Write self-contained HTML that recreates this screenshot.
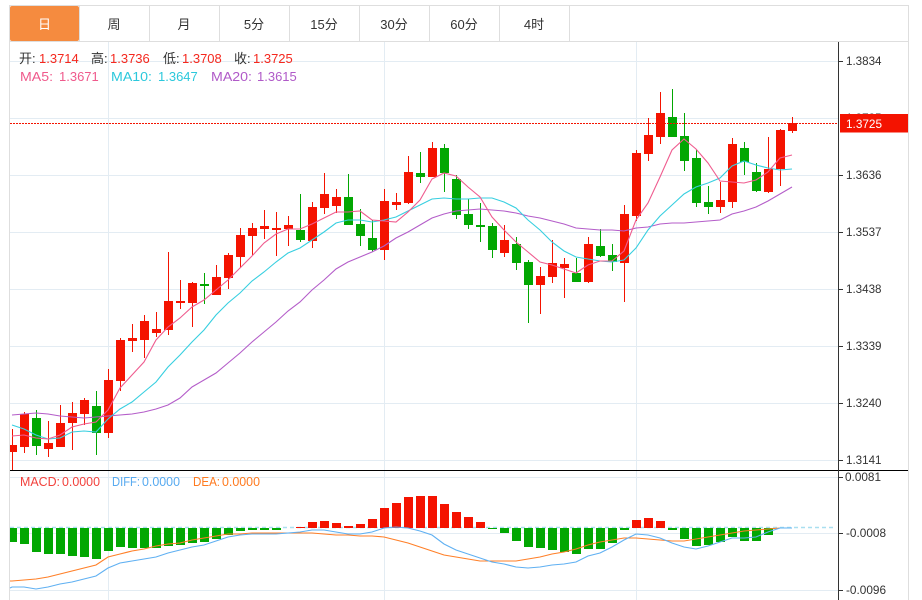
<!DOCTYPE html>
<html lang="zh">
<head>
<meta charset="utf-8">
<title>K线图</title>
<style>
html,body{margin:0;padding:0;background:#fff;width:922px;height:600px;overflow:hidden}
svg{display:block;position:absolute;left:0;top:0}
text{font-family:"Liberation Sans","Noto Sans CJK SC",sans-serif;font-size:13px}
.ax{font-size:12px;fill:#333}
.tab{font-size:13px;fill:#333;text-anchor:middle}
</style>
</head>
<body>
<svg width="922" height="600" viewBox="0 0 922 600" xmlns="http://www.w3.org/2000/svg">
<!-- grid -->
<path fill="none" stroke="#e3ecf3" stroke-width="1" d="M10 61.5H838M10 118.5H838M10 175.5H838M10 232.5H838M10 289.5H838M10 346.5H838M10 403.5H838M10 460.5H838M10 477.5H838M10 533.5H838M10 590.5H838M108.5 42V600M384.5 42V600M636.5 42V600"/>
<!-- frame and tabs -->
<path fill="none" stroke="#dedede" stroke-width="1" d="M9.5 5V600M908.5 5V600M9.5 5.5H908.5M9.5 41.5H908.5M79.5 6V41M149.5 6V41M219.5 6V41M289.5 6V41M359.5 6V41M429.5 6V41M499.5 6V41M569.5 6V41"/>
<rect x="10" y="6" width="69" height="35" rx="2" fill="#f58b3f"/>
<text class="tab" x="44.500" y="29" style="fill:#fff">日</text>
<text class="tab" x="114" y="29">周</text>
<text class="tab" x="184" y="29">月</text>
<text class="tab" x="254" y="29">5分</text>
<text class="tab" x="324" y="29">15分</text>
<text class="tab" x="394" y="29">30分</text>
<text class="tab" x="464" y="29">60分</text>
<text class="tab" x="534" y="29">4时</text>
<!-- candle wicks -->
<path fill="none" stroke="#f41300" stroke-width="1" d="M12.5 429V470M24.5 412V453M48.5 421V457M60.5 405V447M72.5 402V450M84.5 398V425M108.5 369V438M120.5 338V391M132.5 324V352M144.5 315V358M156.5 312V337M168.5 252V335M180.5 280V309M192.5 282V327M216.5 265V295M228.5 253V289M240.5 228V268M252.5 223V255M264.5 210V239M276.5 212V256M288.5 216V246M312.5 202V248M324.5 173V214M336.5 189V213M384.5 189V260M396.5 193V210M408.5 156V204M432.5 142V177M504.5 225V257M540.5 267V314M552.5 240V283M564.5 258V298M588.5 237V283M624.5 205V302M636.5 150V221M648.5 118V161M660.5 92V144M720.5 182V213M732.5 138V208M768.5 137V193M780.5 129V186M792.5 117V133"/>
<path fill="none" stroke="#02a702" stroke-width="1" d="M36.5 410V455M96.5 391V455M204.5 273V304M300.5 194V242M348.5 174V225M360.5 209V246M372.5 220V252M420.5 152V183M444.5 144V192M456.5 175V219M468.5 199V229M480.5 203V242M492.5 223V258M516.5 237V270M528.5 260V323M576.5 258V282M600.5 229V257M612.5 244V271M672.5 89V137M684.5 113V171M696.5 150V207M708.5 186V214M744.5 142V175M756.5 163V192"/>
<!-- candle bodies -->
<path fill="#f41300" d="M10 445h7v7h-7zM20 414h9v33h-9zM44 443h9v6h-9zM56 423h9v24h-9zM68 413h9v10h-9zM80 400h9v14h-9zM104 380h9v53h-9zM116 340h9v41h-9zM128 338h9v3h-9zM140 321h9v19h-9zM152 329h9v4h-9zM164 301h9v29h-9zM176 301h9v2h-9zM188 283h9v20h-9zM212 277h9v18h-9zM224 255h9v23h-9zM236 235h9v22h-9zM248 228h9v8h-9zM260 226h9v3h-9zM272 228h9v2h-9zM284 225h9v4h-9zM308 207h9v34h-9zM320 194h9v14h-9zM332 197h9v9h-9zM380 201h9v49h-9zM392 202h9v3h-9zM404 172h9v31h-9zM428 148h9v29h-9zM500 240h9v13h-9zM536 276h9v9h-9zM548 263h9v14h-9zM560 264h9v4h-9zM584 244h9v38h-9zM620 214h9v49h-9zM632 153h9v63h-9zM644 135h9v19h-9zM656 113h9v24h-9zM716 200h9v7h-9zM728 144h9v58h-9zM764 169h9v23h-9zM776 130h9v39h-9zM788 123h9v8h-9z"/>
<path fill="#02a702" d="M32 418h9v28h-9zM92 406h9v27h-9zM200 284h9v2h-9zM296 230h9v10h-9zM344 197h9v28h-9zM356 224h9v12h-9zM368 238h9v12h-9zM416 173h9v4h-9zM440 148h9v25h-9zM452 179h9v36h-9zM464 214h9v11h-9zM476 225h9v2h-9zM488 226h9v24h-9zM512 244h9v19h-9zM524 262h9v23h-9zM572 273h9v9h-9zM596 246h9v10h-9zM608 255h9v7h-9zM668 117h9v20h-9zM680 136h9v25h-9zM692 158h9v45h-9zM704 202h9v5h-9zM740 148h9v14h-9zM752 172h9v19h-9z"/>
<!-- moving averages -->
<polyline fill="none" stroke="#b45dc9" stroke-width="1.1" points="12,415 24,414 36,413 48,414 60,416 72,417 84,418 96,417 108,416 120,415 132,414 144,412 156,409 168,405 180,398 192,387 204,380 216,373 228,363 240,353 252,342 264,332 276,322 288,311 300,302 312,290 324,280 336,269 348,262 360,257 372,252 384,246 396,238 408,232 420,225 432,218 444,214 456,211 468,210 480,209 492,210 504,211 516,213 528,216 540,218 552,221 564,224 576,228 588,229 600,230 612,230 624,231 636,228 648,227 660,224 672,223 684,223 696,222 708,221 720,220 732,214 744,211 756,207 768,201 780,194 792,187"/>
<polyline fill="none" stroke="#37cfe0" stroke-width="1.1" points="12,425 24,429 36,435 48,439 60,438 72,432 84,431 96,432 108,419 120,409 132,402 144,392 156,382 168,367 180,355 192,342 204,330 216,315 228,303 240,293 252,281 264,272 276,262 288,253 300,248 312,240 324,232 336,223 348,220 360,220 372,222 384,220 396,217 408,211 420,205 432,199 444,198 456,199 468,199 480,198 492,198 504,202 516,208 528,220 540,230 552,242 564,251 576,257 588,259 600,261 612,262 624,260 636,248 648,230 660,216 672,205 684,194 696,187 708,183 720,178 732,166 744,161 756,165 768,168 780,170 792,169"/>
<polyline fill="none" stroke="#ef5c8f" stroke-width="1.1" points="12,436 24,435 36,438 48,439 60,435 72,427 84,424 96,422 108,410 120,388 132,375 144,362 156,340 168,327 180,318 192,307 204,300 216,290 228,280 240,268 252,256 264,243 276,234 288,229 300,229 312,224 324,218 336,212 348,212 360,211 372,220 384,221 396,222 408,212 420,200 432,179 444,173 456,176 468,187 480,197 492,217 504,230 516,242 528,252 540,262 552,265 564,269 576,273 588,265 600,261 612,261 624,251 636,220 648,203 660,177 672,150 684,139 696,149 708,163 720,181 732,182 744,183 756,180 768,172 780,158 792,155"/>
<!-- current price line -->
<line x1="10" y1="123.500" x2="838" y2="123.500" stroke="#f41300" stroke-width="1" stroke-dasharray="2 1"/>
<!-- MACD -->
<line x1="10" y1="527.500" x2="835" y2="527.500" stroke="#a9dff0" stroke-width="1.500" stroke-dasharray="4 3"/>
<path fill="#02a702" d="M10 528h7v14h-7zM20 528h9v16h-9zM32 528h9v24h-9zM44 528h9v26h-9zM56 528h9v26h-9zM68 528h9v28h-9zM80 528h9v29h-9zM92 528h9v31h-9zM104 528h9v23h-9zM116 528h9v19h-9zM128 528h9v20h-9zM140 528h9v20h-9zM152 528h9v20h-9zM164 528h9v18h-9zM176 528h9v17h-9zM188 528h9v15h-9zM200 528h9v14h-9zM212 528h9v11h-9zM224 528h9v7h-9zM236 528h9v3h-9zM248 528h9v2h-9zM260 528h9v2h-9zM272 528h9v2h-9zM488 528h9v1h-9zM500 528h9v5h-9zM512 528h9v13h-9zM524 528h9v19h-9zM536 528h9v20h-9zM548 528h9v22h-9zM560 528h9v24h-9zM572 528h9v26h-9zM584 528h9v21h-9zM596 528h9v21h-9zM608 528h9v15h-9zM620 528h9v2h-9zM668 528h9v2h-9zM680 528h9v11h-9zM692 528h9v18h-9zM704 528h9v17h-9zM716 528h9v14h-9zM728 528h9v9h-9zM740 528h9v13h-9zM752 528h9v13h-9zM764 528h9v7h-9z"/>
<path fill="#f41300" d="M296 527h9v1h-9zM308 522h9v6h-9zM320 521h9v7h-9zM332 523h9v5h-9zM344 526h9v2h-9zM356 524h9v4h-9zM368 519h9v9h-9zM380 508h9v20h-9zM392 503h9v25h-9zM404 497h9v31h-9zM416 496h9v32h-9zM428 496h9v32h-9zM440 504h9v24h-9zM452 512h9v16h-9zM464 517h9v11h-9zM476 522h9v6h-9zM632 520h9v8h-9zM644 518h9v10h-9zM656 521h9v7h-9z"/>
<polyline fill="none" stroke="#ff7f27" stroke-width="1.100" points="10,581 12,581 24,580 36,579 48,577 60,574 72,571 84,568 96,565 108,557 120,554 132,551 144,549 156,546 168,544 180,543 192,540 204,538 216,536 228,534 240,534 252,533 264,533 276,533 288,533 300,533 312,533 324,534 336,535 348,535 360,536 372,536 384,537 396,540 408,543 420,547 432,551 444,555 456,557 468,559 480,561 492,561 504,561 516,561 528,559 540,557 552,554 564,552 576,549 588,545 600,542 612,540 624,538 636,538 648,539 660,540 672,541 684,541 696,539 708,537 720,535 732,533 744,531 756,530 768,529 780,528 792,528"/>
<polyline fill="none" stroke="#5fb0f2" stroke-width="1.100" points="10,588 12,587 24,587 36,589 48,587 60,584 72,582 84,579 96,576 108,568 120,563 132,561 144,559 156,557 168,553 180,550 192,547 204,545 216,541 228,537 240,535 252,534 264,534 276,534 288,533 300,532 312,530 324,530 336,532 348,534 360,534 372,532 384,528 396,527 408,528 420,531 432,535 444,544 456,550 468,554 480,558 492,562 504,564 516,567 528,568 540,567 552,565 564,564 576,562 588,556 600,553 612,547 624,540 636,534 648,535 660,538 672,543 684,547 696,549 708,546 720,542 732,538 744,538 756,537 768,532 780,528 792,528"/>
<!-- divider and axis -->
<line x1="10" y1="470.500" x2="908" y2="470.500" stroke="#000" stroke-width="1"/>
<path fill="none" stroke="#333" stroke-width="1" d="M838.500 42V600M839 61.500H843M839 175.500H843M839 232.500H843M839 289.500H843M839 346.500H843M839 403.500H843M839 460.500H843M839 477.500H843M839 533.500H843M839 590.500H843"/>
<text class="ax" x="846" y="65" textLength="35.500" lengthAdjust="spacingAndGlyphs">1.3834</text>
<text class="ax" x="846" y="122" textLength="35.500" lengthAdjust="spacingAndGlyphs">1.3735</text>
<rect x="840" y="114" width="68" height="18.500" fill="#f41300"/>
<text class="ax" x="846" y="128" textLength="36" lengthAdjust="spacingAndGlyphs" style="fill:#fff">1.3725</text>
<text class="ax" x="846" y="179" textLength="35.500" lengthAdjust="spacingAndGlyphs">1.3636</text>
<text class="ax" x="846" y="236" textLength="35.500" lengthAdjust="spacingAndGlyphs">1.3537</text>
<text class="ax" x="846" y="293" textLength="35.500" lengthAdjust="spacingAndGlyphs">1.3438</text>
<text class="ax" x="846" y="350" textLength="35.500" lengthAdjust="spacingAndGlyphs">1.3339</text>
<text class="ax" x="846" y="407" textLength="35.500" lengthAdjust="spacingAndGlyphs">1.3240</text>
<text class="ax" x="846" y="464" textLength="35.500" lengthAdjust="spacingAndGlyphs">1.3141</text>
<text class="ax" x="845" y="481" textLength="36" lengthAdjust="spacingAndGlyphs">0.0081</text>
<text class="ax" x="846" y="537" textLength="40" lengthAdjust="spacingAndGlyphs">-0.0008</text>
<text class="ax" x="846" y="594" textLength="40" lengthAdjust="spacingAndGlyphs">-0.0096</text>
<!-- legends -->
<text x="19" y="63" fill="#333">开:</text><text x="39" y="63" fill="#f5281e">1.3714</text>
<text x="91" y="63" fill="#333">高:</text><text x="110" y="63" fill="#f5281e">1.3736</text>
<text x="163" y="63" fill="#333">低:</text><text x="182" y="63" fill="#f5281e">1.3708</text>
<text x="234" y="63" fill="#333">收:</text><text x="253" y="63" fill="#f5281e">1.3725</text>
<text x="20" y="81" fill="#ef5a8c" textLength="33" lengthAdjust="spacingAndGlyphs">MA5:</text><text x="59" y="81" fill="#ef5a8c">1.3671</text>
<text x="111" y="81" fill="#2bc8dc" textLength="41" lengthAdjust="spacingAndGlyphs">MA10:</text><text x="158" y="81" fill="#2bc8dc">1.3647</text>
<text x="211" y="81" fill="#b05ac8" textLength="41" lengthAdjust="spacingAndGlyphs">MA20:</text><text x="257" y="81" fill="#b05ac8">1.3615</text>
<text x="20" y="486" fill="#f2413c" textLength="40" lengthAdjust="spacingAndGlyphs">MACD:</text><text x="62" y="486" fill="#f2413c" textLength="38" lengthAdjust="spacingAndGlyphs">0.0000</text>
<text x="112" y="486" fill="#57aaf0" textLength="28" lengthAdjust="spacingAndGlyphs">DIFF:</text><text x="142" y="486" fill="#57aaf0" textLength="38" lengthAdjust="spacingAndGlyphs">0.0000</text>
<text x="193" y="486" fill="#ff7a1f" textLength="27" lengthAdjust="spacingAndGlyphs">DEA:</text><text x="222" y="486" fill="#ff7a1f" textLength="38" lengthAdjust="spacingAndGlyphs">0.0000</text>
</svg>
</body>
</html>
